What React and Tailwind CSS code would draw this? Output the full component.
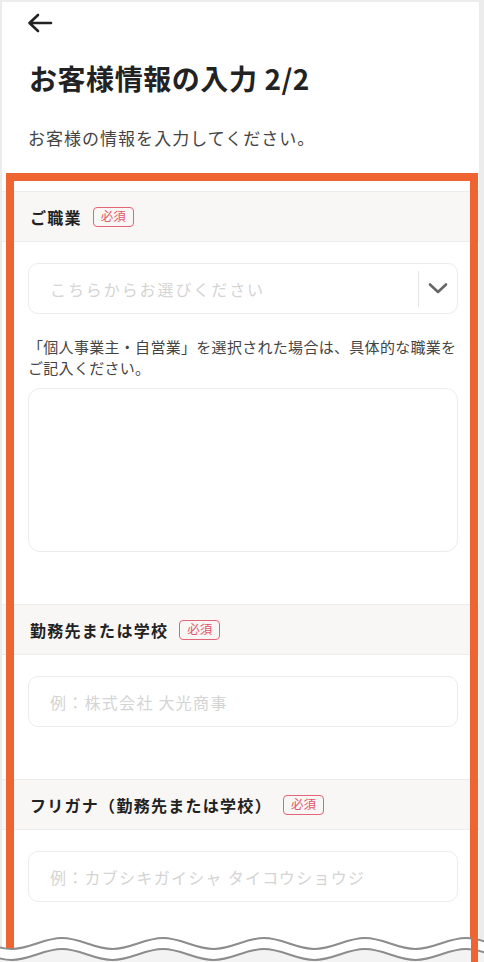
import React from "react";

const FONT = "font-['Noto_Sans_CJK_JP','Noto_Sans',sans-serif]";

const wavePath = (y0, amp, period, x0) => {
  // smooth wave starting at a crest
  const half = period / 2;
  let d = `M ${x0} ${y0 - amp}`;
  let x = x0;
  let up = true;
  while (x < 520) {
    const yEnd = up ? y0 + amp : y0 - amp;
    const yStart = up ? y0 - amp : y0 + amp;
    d += ` C ${x + half * 0.36} ${yStart} ${x + half * 0.64} ${yEnd} ${x + half} ${yEnd}`;
    x += half;
    up = !up;
  }
  return { d, endX: x };
};

const Required = () => (
  <span className="inline-flex h-[20px] w-[41px] items-center justify-center rounded-[4px] border-[1.5px] border-[#e46478] text-[12.5px] leading-none text-[#e0566a]">
    必須
  </span>
);

const SectionHeader = ({ title }) => (
  <div className="flex h-[51px] items-center gap-[11px] border-y border-[#ececec] bg-[#f8f7f5] pl-[28px]">
    <span className="text-[16px] font-bold tracking-[0.08em] text-[#222]">{title}</span>
    <Required />
  </div>
);

const TextInput = ({ placeholder }) => (
  <input
    type="text"
    placeholder={placeholder}
    className="h-[51px] w-full rounded-[10px] border border-[#ececec] bg-white px-[21px] text-[16px] tracking-[0.08em] text-[#333] outline-none placeholder:text-[#d4d4d4]"
  />
);

const Wave = () => {
  const top = wavePath(943.5, 5.5, 101, -39);
  const bottom = wavePath(954.5, 5.5, 101, -39);
  return (
    <svg
      className="pointer-events-none absolute left-0 top-0"
      width="484"
      height="962"
      viewBox="0 0 484 962"
    >
      <path d={`${top.d} L ${top.endX} 962 L -39 962 Z`} fill="#ffffff" />
      <path d={`${bottom.d} L ${bottom.endX} 962 L -39 962 Z`} fill="#f3f3f3" />
      <path d={top.d} fill="none" stroke="#8c8c8c" strokeWidth="2" />
      <path d={bottom.d} fill="none" stroke="#8c8c8c" strokeWidth="2" />
      <rect x="471" y="925" width="7" height="37" fill="#ef6531" />
    </svg>
  );
};

export default function App() {
  return (
    <div className={`relative h-[962px] w-[484px] overflow-hidden bg-[#ececec] ${FONT}`}>
      <div className="ml-[2px] mt-[2px] h-[960px] w-[477px] bg-white">
        {/* header */}
        <div className="pl-[25px] pt-[11px]">
          <svg width="26" height="20" viewBox="0 0 26 20" fill="none">
            <path
              d="M24 10H3 M11 2 L2.5 10 L11 18"
              stroke="#222"
              strokeWidth="2.6"
              strokeLinecap="round"
              strokeLinejoin="round"
            />
          </svg>
        </div>
        <h1 className="mt-[25px] pl-[27px] text-[28px] font-bold leading-[40px] tracking-[0.02em] text-[#222]">
          お客様情報の入力 2/2
        </h1>
        <p className="mt-[28px] pl-[26px] text-[17px] leading-[24px] tracking-[0.06em] text-[#444]">
          お客様の情報を入力してください。
        </p>

        <div className="mt-[41px]">
          {/* occupation */}
          <SectionHeader title="ご職業" />
          <div className="pb-[52px] pl-[26px] pr-[21px] pt-[21px]">
            <div className="flex h-[51px] items-center rounded-[10px] border border-[#ececec] bg-white">
              <span className="flex-1 pl-[21px] text-[16px] tracking-[0.12em] text-[#d4d4d4]">
                こちらからお選びください
              </span>
              <div className="h-[36px] w-px bg-[#e6e6e6]" />
              <div className="flex w-[38px] items-center justify-center">
                <svg width="20" height="13" viewBox="0 0 20 13" fill="none">
                  <path
                    d="M2 2.5 L10 10 L18 2.5"
                    stroke="#666"
                    strokeWidth="2.6"
                    strokeLinecap="round"
                    strokeLinejoin="round"
                  />
                </svg>
              </div>
            </div>
            <p className="mt-[22px] text-[15px] leading-[21px] tracking-[0.02em] text-[#444]">
              「個人事業主・自営業」を選択された場合は、具体的な職業をご記入ください。
            </p>
            <textarea className="mt-[10px] block h-[164px] w-full resize-none rounded-[12px] border border-[#ececec] bg-white outline-none" />
          </div>

          {/* workplace */}
          <SectionHeader title="勤務先または学校" />
          <div className="pb-[52px] pl-[26px] pr-[21px] pt-[21px]">
            <TextInput placeholder="例：株式会社 大光商事" />
          </div>

          {/* workplace kana */}
          <SectionHeader title="フリガナ（勤務先または学校）" />
          <div className="pb-[52px] pl-[26px] pr-[21px] pt-[21px]">
            <TextInput placeholder="例：カブシキガイシャ タイコウショウジ" />
          </div>
        </div>
      </div>

      {/* highlight frame */}
      <div className="pointer-events-none absolute left-[6px] top-[173px] h-[800px] w-[472px] border-[8px] border-b-0 border-[#ef6531]" />
      <Wave />
    </div>
  );
}
